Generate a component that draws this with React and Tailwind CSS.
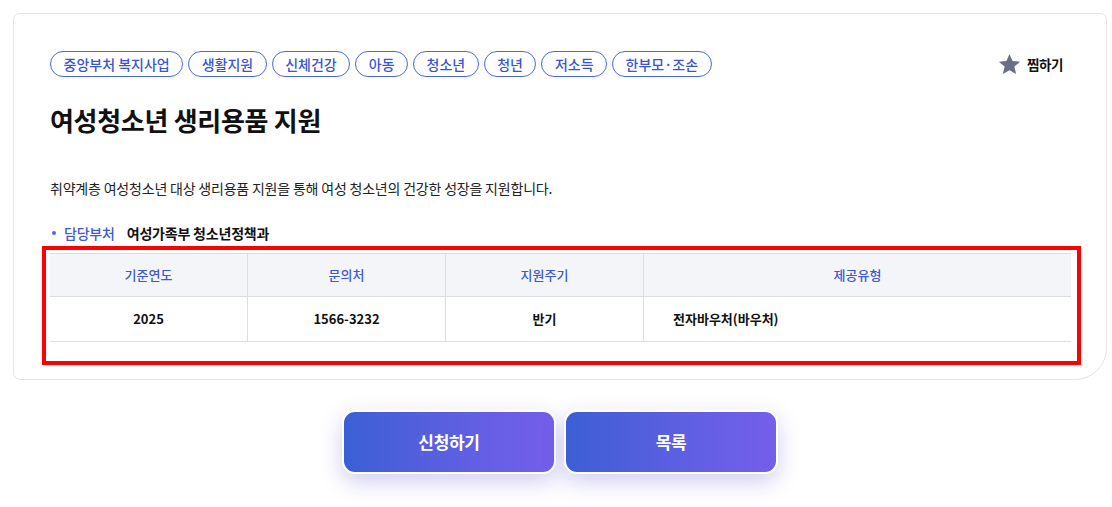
import React from "react";

const tags = ["중앙부처 복지사업", "생활지원", "신체건강", "아동", "청소년", "청년", "저소득", "한부모·조손"];

function Star() {
  return (
    <svg width="23" height="23" viewBox="0 0 24 24" aria-hidden="true">
      <path
        d="M12 1l3.2 7.3 7.9.7-6 5.2 1.8 7.8L12 17.9 5.1 22l1.8-7.8-6-5.2 7.9-.7z"
        fill="#6b6e86"
      />
    </svg>
  );
}

export default function App() {
  return (
    <div className="w-[1112px] h-[507px] bg-white pt-[13px] pl-[13px] pr-[5px] font-['Noto_Sans_CJK_KR','Noto_Sans',sans-serif] text-[#111]">
      <div className="border border-[#e3e3e3] rounded-[7px] rounded-br-[32px] pl-[36px] pr-[35px] pt-[37px] pb-[37px]">
        <div className="flex items-center justify-between">
          <div className="flex gap-[5px]">
            {tags.map((t) => (
              <span
                key={t}
                className="h-[26px] px-[12.5px] flex items-center rounded-full border border-[#4a69df] text-[#3a55d4] text-[14px] font-medium leading-none"
              >
                {t}
              </span>
            ))}
          </div>
          <div className="flex items-center gap-[6px] mr-[8px]">
            <Star />
            <span className="text-[13.5px] font-bold tracking-[-0.4px] text-[#111]">찜하기</span>
          </div>
        </div>

        <h1 className="mt-[26px] text-[26px] font-bold tracking-[-0.3px] leading-[34px] text-[#111]">
          여성청소년 생리용품 지원
        </h1>

        <p className="mt-[41px] text-[14px] tracking-[-0.2px] leading-[20px] text-[#222]">
          취약계층 여성청소년 대상 생리용품 지원을 통해 여성 청소년의 건강한 성장을 지원합니다.
        </p>

        <div className="mt-[25px] flex items-center text-[14px] tracking-[-0.2px] leading-[20px]">
          <span className="ml-[2px] w-[4px] h-[4px] rounded-full bg-[#4a69df]"></span>
          <span className="ml-[8px] text-[#3f5ad6] font-medium">담당부처</span>
          <span className="ml-[12px] font-bold text-[#111]">여성가족부 청소년정책과</span>
        </div>

        <div className="relative mt-[10px]">
          <div className="grid grid-cols-[197px_198px_198px_1fr] text-[13px]">
            {["기준연도", "문의처", "지원주기", "제공유형"].map((h, i) => (
              <div
                key={h}
                className={
                  "h-[44px] flex items-center justify-center bg-[#f4f5f9] border-t border-b border-[#dcdde3] text-[#4058d4] font-medium " +
                  (i > 0 ? "border-l" : "")
                }
              >
                {h}
              </div>
            ))}
            <div className="h-[45px] flex items-center justify-center border-b border-[#dedede] font-bold">2025</div>
            <div className="h-[45px] flex items-center justify-center border-b border-l border-[#dedede] font-bold">1566-3232</div>
            <div className="h-[45px] flex items-center justify-center border-b border-l border-[#dedede] font-bold">반기</div>
            <div className="h-[45px] flex items-center pl-[29px] border-b border-l border-[#dedede] font-bold">전자바우처(바우처)</div>
          </div>
          <div className="absolute top-[-7px] left-[-8px] right-[-10px] bottom-[-23px] border-[4px] border-[#ff0000] pointer-events-none"></div>
        </div>
      </div>

      <div className="mt-[30px] flex justify-center gap-[8px]">
        {["신청하기", "목록"].map((b) => (
          <button
            key={b}
            className="w-[214px] h-[64px] rounded-[13px] border-2 border-white bg-gradient-to-r from-[#3b5fd6] to-[#755eeb] text-white text-[17px] font-bold tracking-[-0.3px] shadow-[0_8px_22px_rgba(90,80,210,0.28)]"
          >
            {b}
          </button>
        ))}
      </div>
    </div>
  );
}
